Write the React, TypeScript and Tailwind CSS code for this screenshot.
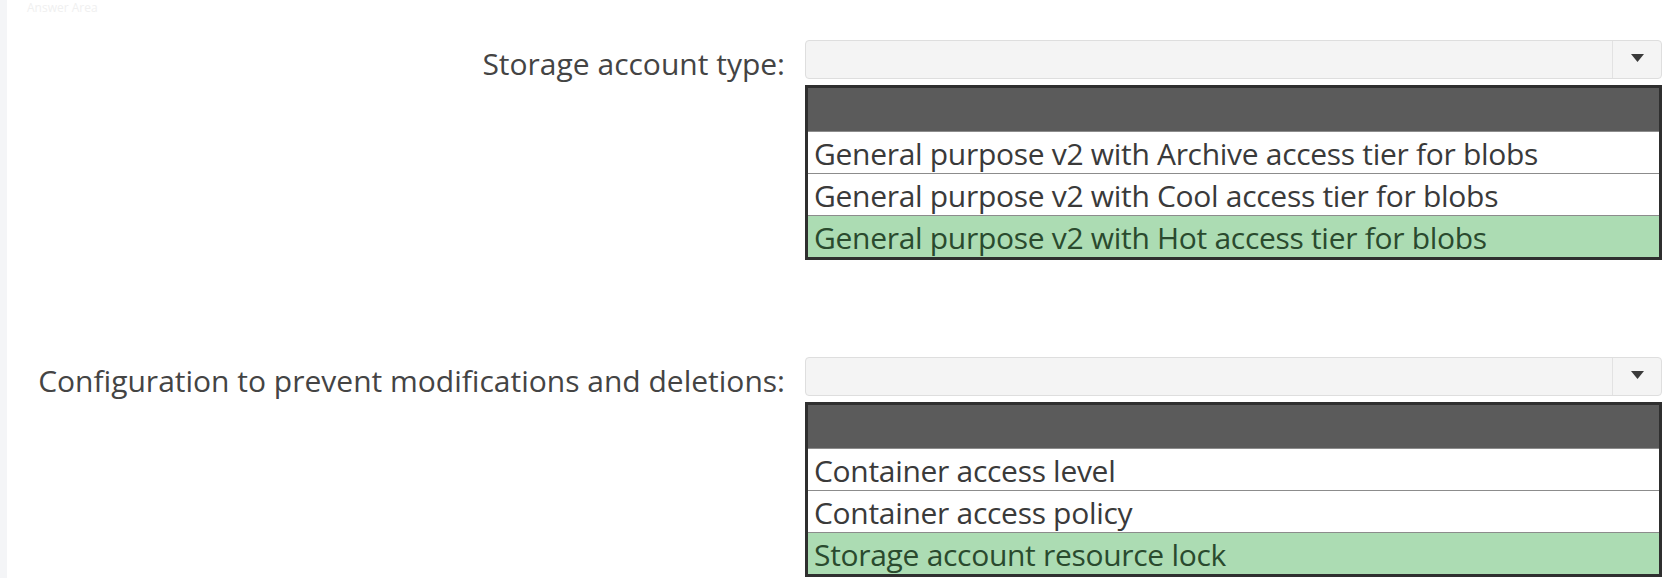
import { useState } from 'react';

type Question = {
  label: string;
  options: string[];
  answer: number;
};

const questions: Question[] = [
  {
    label: 'Storage account type:',
    options: [
      'General purpose v2 with Archive access tier for blobs',
      'General purpose v2 with Cool access tier for blobs',
      'General purpose v2 with Hot access tier for blobs',
    ],
    answer: 2,
  },
  {
    label: 'Configuration to prevent modifications and deletions:',
    options: ['Container access level', 'Container access policy', 'Storage account resource lock'],
    answer: 2,
  },
];

function Dropdown({ q }: { q: Question }) {
  const [selected] = useState(q.answer);

  return (
    <div className="flex flex-col">
      {/* Closed select */}
      <div className="flex h-[39px] rounded-[4px] border border-[#dedede] bg-[#f4f4f4]">
        <div className="flex-1" />
        <div className="flex w-[49px] items-center justify-center border-l border-[#e2e2e2] pb-[4px]">
          <svg width="13" height="8" viewBox="0 0 13 8">
            <path d="M0 0 L13 0 L6.5 8 Z" fill="#3a3a3a" />
          </svg>
        </div>
      </div>

      {/* Answer area */}
      <div className="mt-[6px] border-[3px] border-[#2f2f2f] bg-white">
        <div className="h-[43px] bg-[#5b5b5b]" />
        {q.options.map((opt, i) => (
          <div
            key={opt}
            className={
              'h-[42px] overflow-hidden whitespace-nowrap border-t border-[#8c8c8c] px-[6px] text-[30px] leading-[43px] tracking-[-0.3px] ' +
              (i === selected ? 'bg-[#acdcb3] text-[#2a4a2e]' : 'bg-white text-[#3a3a3a]')
            }
          >
            {opt}
          </div>
        ))}
      </div>
    </div>
  );
}

export default function App() {
  return (
    <div
      className="flex h-[578px] w-[1670px] overflow-hidden bg-white"
      style={{ fontFamily: '"Open Sans", "Noto Sans", sans-serif' }}
    >
      <div className="w-[7px] bg-[#f4f5f7]" />
      <div className="relative flex-1">
        <p className="absolute left-[20px] top-0 text-[12px] leading-[16px] text-[#f0f0f0]">Answer Area</p>
        <div className="flex flex-col gap-[97px] pt-[40px]">
          {questions.map((q) => (
            <div key={q.label} className="grid grid-cols-[778px_857px] gap-x-[20px]">
              <div className="flex h-[39px] items-center justify-end whitespace-nowrap pt-[7px] text-[30px] text-[#444444]">
                {q.label}
              </div>
              <Dropdown q={q} />
            </div>
          ))}
        </div>
      </div>
    </div>
  );
}
